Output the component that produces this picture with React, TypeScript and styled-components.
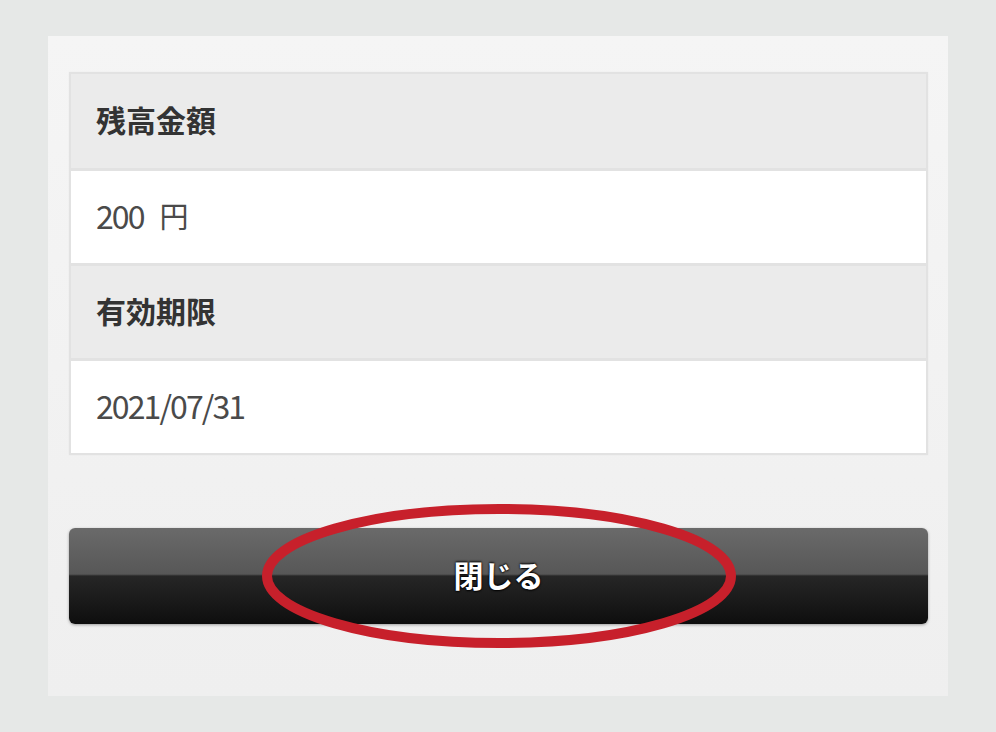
import styled, { createGlobalStyle } from "styled-components";

const GlobalStyle = createGlobalStyle`
  html, body {
    margin: 0;
    padding: 0;
    background: #e6e8e7;
  }
  body {
    font-family: "Noto Sans CJK JP", "Noto Sans", sans-serif;
  }
`;

const Page = styled.div`
  width: 996px;
  height: 732px;
  padding: 36px 48px;
  box-sizing: border-box;
`;

const Panel = styled.div`
  height: 660px;
  background: linear-gradient(#f5f5f5, #efefef);
  padding: 36px 20px 0 21px;
  box-sizing: border-box;
`;

const Table = styled.div`
  display: flex;
  flex-direction: column;
  border: 2px solid #e2e2e2;
  box-shadow: 0 0 2px rgba(0, 0, 0, 0.04);
`;

const Cell = styled.div<{ $head?: boolean }>`
  height: ${(p) => (p.$head ? 94 : 92)}px;
  display: flex;
  align-items: center;
  padding: 0 0 5px 25px;
  box-sizing: border-box;
  background: ${(p) => (p.$head ? "#ebebeb" : "#ffffff")};
  color: ${(p) => (p.$head ? "#333333" : "#4a4a4a")};
  font-size: ${(p) => (p.$head ? 30 : 32)}px;
  font-weight: ${(p) => (p.$head ? 700 : 400)};
  letter-spacing: ${(p) => (p.$head ? "0" : "-1.9px")};
  & + & {
    border-top: 3px solid #e2e2e2;
    height: ${(p) => (p.$head ? 96 : 95)}px;
  }
`;

const Yen = styled.span`
  margin-left: 16px;
  font-size: 29px;
  letter-spacing: 0;
`;

const ButtonWrap = styled.div`
  position: relative;
  margin-top: 73px;
`;

const CloseButton = styled.button`
  display: flex;
  width: 100%;
  height: 96px;
  padding: 0 0 4px;
  align-items: center;
  justify-content: center;
  border: none;
  border-radius: 6px;
  background: linear-gradient(
    #6a6a6a 0%,
    #575757 48%,
    #262626 50%,
    #181818 80%,
    #0e0e0e 100%
  );
  box-shadow: 0 1px 3px rgba(0, 0, 0, 0.35);
  color: #ffffff;
  font-family: "Noto Sans CJK JP", sans-serif;
  font-size: 30px;
  font-weight: 700;
  text-shadow: 0 -1px 2px #000, 0 1px 2px #000;
  cursor: pointer;
`;

const Ring = styled.svg`
  position: absolute;
  left: 190px;
  top: -27px;
  pointer-events: none;
  overflow: visible;
`;

export default function App() {
  return (
    <>
      <GlobalStyle />
      <Page>
        <Panel>
          <Table>
            <Cell $head>残高金額</Cell>
            <Cell>
              200<Yen>円</Yen>
            </Cell>
            <Cell $head>有効期限</Cell>
            <Cell>2021/07/31</Cell>
          </Table>
          <ButtonWrap>
            <CloseButton>閉じる</CloseButton>
            <Ring width="480" height="150">
              <ellipse
                cx="240"
                cy="75"
                rx="232"
                ry="67"
                fill="none"
                stroke="#c7202b"
                strokeWidth="10"
              />
            </Ring>
          </ButtonWrap>
        </Panel>
      </Page>
    </>
  );
}
